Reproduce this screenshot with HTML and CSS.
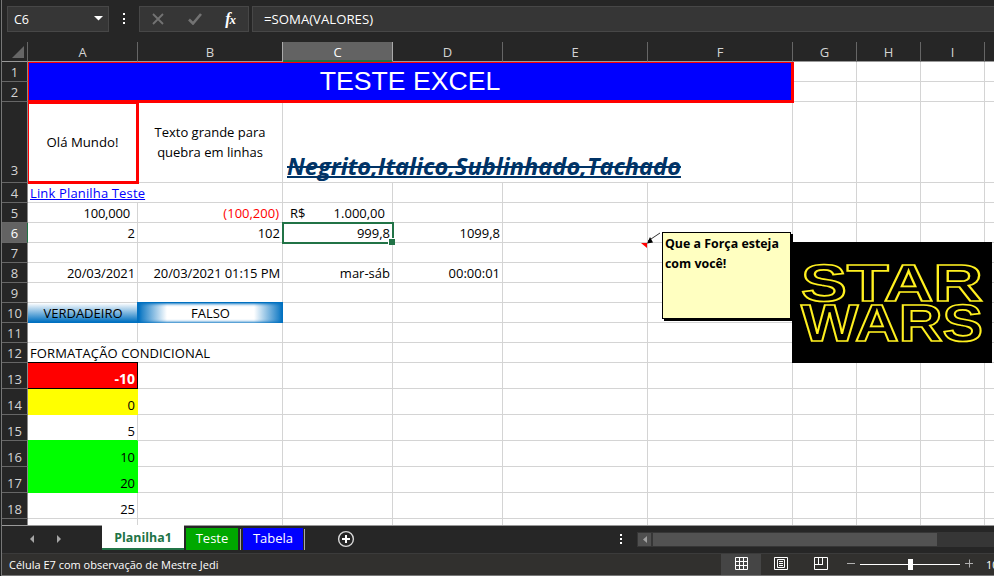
FILE: index.html
```html
<!DOCTYPE html>
<html lang="pt-BR">
<head>
<meta charset="utf-8">
<title>Planilha1</title>
<link rel="stylesheet" href="styles.css">
</head>
<body>
<div class="app">
  <header class="formula-bar">
    <div class="box name-box"><span>C6</span><svg width="9" height="5" viewBox="0 0 9 5"><path d="M0 0h9L4.500 4.500z" fill="#fff"/></svg></div>
    <svg class="grip" width="2" height="12" viewBox="0 0 2 12"><path d="M0 0h2v2H0zM0 5h2v2H0zM0 9h2v2H0z" fill="#fff"/></svg>
    <div class="box fx-box">
      <svg width="12" height="12" viewBox="0 0 12 12"><path d="M1 1l10 10M11 1L1 11" stroke="#737373" stroke-width="1.800" fill="none"/></svg>
      <svg width="14" height="12" viewBox="0 0 14 12"><path d="M1 6.500l4 4L13 1" stroke="#737373" stroke-width="2.600" fill="none"/></svg>
      <span class="fx">f<small>x</small></span>
    </div>
    <div class="box formula"><span>=SOMA(VALORES)</span></div>
  </header>

  <main class="sheet">
    <table>
      <colgroup><col class="ch"><col class="cm"><col class="cl"><col class="cm"><col class="cm"><col class="cl"><col class="cl"><col class="cs"><col class="cs"><col class="cs"><col class="cx"></colgroup>
      <thead>
        <tr><th class="corner"><svg width="12" height="12" viewBox="0 0 12 12"><path d="M12 0v12H0z" fill="#666"/></svg></th><th>A</th><th>B</th><th class="sel">C</th><th>D</th><th>E</th><th>F</th><th>G</th><th>H</th><th>I</th><th></th></tr>
      </thead>
      <tbody>
        <tr><th>1</th><td class="title" colspan="6" rowspan="2">TESTE EXCEL</td><td></td><td></td><td></td><td></td></tr>
        <tr><th>2</th><td></td><td></td><td></td><td></td></tr>
        <tr class="big"><th>3</th><td class="hello">Olá Mundo!</td><td class="wrap">Texto grande para<br>quebra em linhas</td><td class="fancy" colspan="4"><span>Negrito,Italico,Sublinhado,Tachado</span></td><td></td><td></td><td></td><td></td></tr>
        <tr><th>4</th><td class="link" colspan="2"><span>Link Planilha Teste</span></td><td></td><td></td><td></td><td></td><td></td><td></td><td></td><td></td></tr>
        <tr><th>5</th><td class="n acc">100,000</td><td class="n neg">(100,200)</td><td class="money"><div><span>R$</span><span>1.000,00</span></div></td><td></td><td></td><td></td><td></td><td></td><td></td><td></td></tr>
        <tr><th class="sel">6</th><td class="n">2</td><td class="n">102</td><td class="n active">999,8</td><td class="n">1099,8</td><td></td><td></td><td></td><td></td><td></td><td></td></tr>
        <tr><th>7</th><td></td><td></td><td></td><td></td><td class="noted"></td><td></td><td></td><td></td><td></td><td></td></tr>
        <tr><th>8</th><td class="n date">20/03/2021</td><td class="n date">20/03/2021 01:15 PM</td><td class="n">mar-sáb</td><td class="n">00:00:01</td><td></td><td></td><td></td><td></td><td></td><td></td></tr>
        <tr><th>9</th><td></td><td></td><td></td><td></td><td></td><td></td><td></td><td></td><td></td><td></td></tr>
        <tr><th>10</th><td class="true">VERDADEIRO</td><td class="false"><div>FALSO</div></td><td></td><td></td><td></td><td></td><td></td><td></td><td></td><td></td></tr>
        <tr><th>11</th><td></td><td></td><td></td><td></td><td></td><td></td><td></td><td></td><td></td><td></td></tr>
        <tr><th>12</th><td class="label" colspan="2"><span>FORMATAÇÃO CONDICIONAL</span></td><td></td><td></td><td></td><td></td><td></td><td></td><td></td><td></td></tr>
        <tr class="tall"><th>13</th><td class="n red">-10</td><td></td><td></td><td></td><td></td><td></td><td></td><td></td><td></td><td></td></tr>
        <tr class="tall"><th>14</th><td class="n yellow">0</td><td></td><td></td><td></td><td></td><td></td><td></td><td></td><td></td><td></td></tr>
        <tr class="tall"><th>15</th><td class="n above-green">5</td><td></td><td></td><td></td><td></td><td></td><td></td><td></td><td></td><td></td></tr>
        <tr class="tall"><th>16</th><td class="n green">10</td><td></td><td></td><td></td><td></td><td></td><td></td><td></td><td></td><td></td></tr>
        <tr class="tall"><th>17</th><td class="n green">20</td><td></td><td></td><td></td><td></td><td></td><td></td><td></td><td></td><td></td></tr>
        <tr class="tall"><th>18</th><td class="n">25</td><td></td><td></td><td></td><td></td><td></td><td></td><td></td><td></td><td></td></tr>
        <tr class="tall"><th></th><td></td><td></td><td></td><td></td><td></td><td></td><td></td><td></td><td></td><td></td></tr>
      </tbody>
    </table>
    <svg class="pointer" width="20" height="18" viewBox="0 0 20 18"><path d="M-2 11h6v5z" fill="#f00"/><path d="M17 1L5 9" stroke="#333" fill="none"/><path d="M4 11.500l3-6.500 3 5.500z" fill="#000"/></svg>
    <div class="note">Que a Força esteja<br>com você!</div>
    <svg class="logo" width="200" height="121" viewBox="0 0 200 121">
      <rect width="200" height="121" fill="#000"/>
      <g class="logo-words">
        <text x="9" y="58.500" textLength="182" lengthAdjust="spacingAndGlyphs">STAR</text>
        <text x="9" y="98.500" textLength="182" lengthAdjust="spacingAndGlyphs">WARS</text>
      </g>
    </svg>
  </main>

  <nav class="tabs">
    <div class="arrows">
      <svg width="5" height="8" viewBox="0 0 5 8"><path d="M4 0v8L0 4z" fill="#a6a6a6"/></svg>
      <svg width="5" height="8" viewBox="0 0 5 8"><path d="M0 0v8l4-4z" fill="#a6a6a6"/></svg>
    </div>
    <div class="tab current"><span>Planilha1</span></div>
    <div class="tab teste">Teste</div>
    <i class="sep"></i>
    <div class="tab tabela">Tabela</div>
    <i class="sep last"></i>
    <svg class="add" width="18" height="18" viewBox="0 0 18 18"><circle cx="9" cy="9" r="7.400" fill="none" stroke="#d8d8d8" stroke-width="1.400"/><path d="M9 5v8M5 9h8" stroke="#fff" stroke-width="2"/></svg>
    <svg class="tab-grip" width="2" height="12" viewBox="0 0 2 12"><path d="M0 0h2v2H0zM0 4h2v2H0zM0 8h2v2H0z" fill="#fff"/></svg>
    <div class="scroll">
      <div class="scroll-btn"><svg width="4" height="7" viewBox="0 0 4 7"><path d="M4 0v7L0 3.500z" fill="#a0a0a0"/></svg></div>
      <div class="thumb"></div>
    </div>
  </nav>

  <footer class="status">
    <span class="message">Célula E7 com observação de Mestre Jedi</span>
    <div class="view on"><svg width="13" height="13" viewBox="0 0 13 13"><path d="M.5.5h12v12H.5zM4.500 0v13M8.500 0v13M0 4.500h13M0 8.500h13" fill="none" stroke="#fff"/></svg></div>
    <div class="view"><svg width="14" height="13" viewBox="0 0 14 13"><path d="M.5.5h13v12H.5zM3.500 2.500h7v8h-7zM5 4.500h4M5 6.500h4M5 8.500h4" fill="none" stroke="#fff"/></svg></div>
    <div class="view"><svg width="14" height="13" viewBox="0 0 14 13"><path d="M.5.5h13v12H.5zM4.500 0v7.500M8.500 0v7.500M0 7.500h9" fill="none" stroke="#fff"/></svg></div>
    <svg class="zoom" width="126" height="13" viewBox="0 0 126 13"><path d="M0 5.500h8M118 5.500h8M122.500 1.500v8" stroke="#b0b0b0"/><path d="M13 6.500h100" stroke="#fff"/><path d="M61 1h5v11h-5z" fill="#fff"/></svg>
    <span class="percent">100%</span>
  </footer>
</div>
</body>
</html>
```

FILE: styles.css
```css
* { box-sizing: border-box; }

body {
  margin: 0;
  width: 994px;
  height: 576px;
  overflow: hidden;
  background: #262626;
  font-family: "Open Sans", "Noto Sans", sans-serif;
}

.app {
  display: flex;
  flex-direction: column;
  width: 994px;
  height: 576px;
  overflow: hidden;
  border-left: 1px solid #1e2020;
  box-shadow: inset 1px 0 #777;
  padding-left: 1px;
}

/* Formula bar */
.formula-bar {
  display: flex;
  align-items: center;
  height: 42px;
  padding: 0 0 4px 5px;
  flex: none;
  color: #fff;
  font-size: 12px;
}
.box {
  height: 26px;
  display: flex;
  align-items: center;
  background: #363636;
  border: 1px solid #474747;
}
.name-box { width: 102px; justify-content: space-between; padding: 0 5px 0 6px; font-size: 12.5px; }
.name-box svg { position: relative; top: -1px; }
.grip { margin: 0 14px; }
.fx-box { width: 110px; padding: 0 12px; justify-content: space-between; }
.fx { font: italic bold 16px/20px "Liberation Serif", serif; }
.fx small { font-size: 13px; margin-left: -1px; }
.formula { flex: 1; margin-left: 3px; padding-left: 11px; border-right: 0; font-size: 13.2px; }

/* Grid */
.sheet {
  position: relative;
  height: 483px;
  overflow: hidden;
  flex: none;
  background: #fff;
}
table {
  table-layout: fixed;
  width: 993px;
  border-collapse: separate;
  border-spacing: 0;
  font-size: 13px;
  line-height: 18px;
  color: #000;
}
.ch { width: 26px; }
.cm { width: 110px; }
.cl { width: 145px; }
.cs { width: 64px; }
.cx { width: 10px; }
tr { height: 20px; }
.big { height: 81px; }
.big th { padding-bottom: 3px; }
.tall { height: 26px; }
td {
  padding: 0;
  border-right: 1px solid #d4d4d4;
  border-bottom: 1px solid #d4d4d4;
  vertical-align: bottom;
  white-space: nowrap;
}
th {
  padding: 0;
  background: #262626;
  color: #d4d4d4;
  font-weight: 400;
  text-align: center;
  vertical-align: bottom;
  border-right: 1px solid #8a8a8a;
  border-bottom: 1px solid #666;
}
thead th { border-right-color: #666; border-bottom-color: #999; line-height: 17px; }
thead .sel { background: #636363; color: #fff; border-bottom-color: #217346; box-shadow: inset 0 -1px #217346, -1px 0 #aaa; border-right-color: #aaa; }
tbody .sel { background: #636363; color: #fff; border-right-color: #217346; }
.corner svg { display: block; margin: 0 3px 3px auto; }

.n { text-align: right; padding-right: 2px; }
.date { letter-spacing: -0.1px; }
.acc { padding-right: 7px; letter-spacing: -0.2px; }
.neg { color: #f00; padding-right: 3px; }
.title {
  background: #00f;
  color: #fff;
  font: 26.67px/34px "Liberation Sans", sans-serif;
  text-align: center;
  vertical-align: top;
  border: 1px solid #f00;
  border-right: 2px solid #f00;
  border-bottom-width: 2px;
  box-shadow: 0 1px #f00, 1px 1px #f00, 1px 0 #f00;
  position: relative;
  padding-top: 1px;
}
.hello {
  text-align: center;
  vertical-align: middle;
  border: 1px solid #f00;
  border-right-width: 2px;
  border-bottom-width: 2px;
  box-shadow: 1px 1px #f00, 1px 0 #f00, 0 1px #f00, inset 0 1px #f00;
  position: relative;
  font-size: 13.2px;
}
.wrap { text-align: center; vertical-align: middle; line-height: 20px; }
.fancy {
  padding-left: 4px;
  color: #003366;
  font-weight: 700;
  font-style: italic;
  font-size: 23.6px;
  line-height: 31px;
}
.fancy span { text-decoration: underline line-through; text-decoration-thickness: 2px; text-decoration-skip-ink: none; }
.link { padding-left: 2px; color: #00f; letter-spacing: 0.15px; }
.link span { text-decoration: underline; text-decoration-skip-ink: none; }
.label { padding-left: 2px; letter-spacing: 0.1px; }
.money div { display: flex; justify-content: space-between; padding: 0 7px; }
.active { outline: 2px solid #217346; outline-offset: -1px; position: relative; }
.active::after {
  content: "";
  position: absolute;
  right: -3px;
  bottom: -3px;
  width: 6px;
  height: 6px;
  background: #217346;
  border: 1px solid #fff;
  border-width: 1px 0 0 1px;
}
.true { text-align: center; background: linear-gradient(#fff, #0070c0); border-color: #0070c0; border-right: 0; }
.false { text-align: center; border: 0; background: #0070c0; box-shadow: 0 -1px #0070c0, -1px 0 #0070c0, -1px -1px #0070c0; }
.false div {
  height: 20px;
  background: linear-gradient(90deg, #0070c0, #fff 20%, #fff 80%, #0070c0);
  box-shadow: inset 0 0 3px 1px #0070c0;
  line-height: 21px;
}
.red { background: #f00; color: #fff; font-weight: 700; font-size: 14px; border-color: #000; box-shadow: 0 -1px #000; }
.yellow { background: #ff0; border-color: #ff0; }
.above-green { border-bottom-color: #0f0; }
.green { background: #0f0; border-color: #0f0; }

/* Floating objects */
.pointer { position: absolute; left: 641px; top: 190px; overflow: visible; }
.note {
  position: absolute;
  left: 660px;
  top: 190px;
  width: 129px;
  height: 87px;
  padding: 1px 2px;
  background: #ffffc1;
  border: 1px solid #000;
  box-shadow: 2px 2px #000;
  font-weight: 700;
  font-size: 12.4px;
  line-height: 20px;
  white-space: nowrap;
}
.logo { position: absolute; left: 790px; top: 200px; }
.logo-words {
  font: bold 51px "Liberation Sans", sans-serif;
  fill: none;
  stroke: #fff01f;
  stroke-width: 1.7px;
}

/* Sheet tabs */
.tabs {
  display: flex;
  height: 28px;
  flex: none;
  border-top: 1px solid #999;
  color: #fff;
  font-size: 13px;
  line-height: 20px;
}
.arrows { width: 100px; display: flex; gap: 22px; padding: 9px 0 0 28px; }
.tab { text-align: center; height: 22px; margin-top: 2px; }
.current {
  width: 82px;
  height: 25px;
  margin-top: -1px;
  padding-top: 3px;
  background: #fff;
  color: #217346;
  font-weight: 700;
  font-size: 12.4px;
  border-bottom: 2px solid #217346;
}
.teste { width: 52px; margin-left: 2px; background: #00a800; }
.tabela { width: 60px; margin-left: 2px; background: #00f; }
.sep { width: 1px; height: 21px; margin: 3px 0 0 2px; background: #aaa; }
.sep.last { margin-left: 1px; }
.add { margin: 4px 0 0 32px; }
.tab-grip { margin: 8px 0 0 265px; }
.scroll { display: flex; flex: 1; height: 15px; margin: 6px 0 0 15px; padding: 1px; gap: 2px; background: #363636; }
.scroll-btn { width: 13px; display: flex; align-items: center; justify-content: center; background: #505050; }
.thumb { width: 284px; background: #525252; }

/* Status bar */
.status {
  display: flex;
  height: 23px;
  flex: none;
  background: #31302e;
  border-top: 1px solid #3b3b3b;
  border-bottom: 1px solid #777;
  color: #fff;
  font-size: 11px;
  line-height: 21px;
  white-space: nowrap;
}
.message { width: 719px; flex: none; padding-left: 7px; }
.view { width: 40px; flex: none; display: flex; justify-content: center; padding-top: 3px; }
.on { background: #454545; }
.zoom { margin: 4px 0 0 6px; flex: none; }
.percent { margin-left: 13px; flex: none; }
```
